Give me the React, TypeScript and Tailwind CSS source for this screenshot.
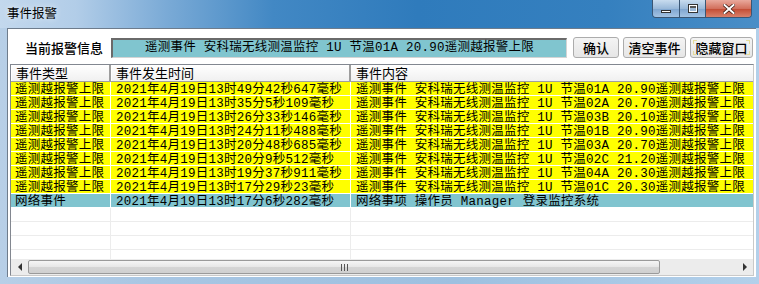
import React from "react";

type Row = { kind: "alarm" | "net"; type: string; time: string; content: string };

const rows: Row[] = [
  { kind: "alarm", type: "遥测越报警上限", time: "2021年4月19日13时49分42秒647毫秒", content: "遥测事件 安科瑞无线测温监控 1U 节温01A 20.90遥测越报警上限" },
  { kind: "alarm", type: "遥测越报警上限", time: "2021年4月19日13时35分5秒109毫秒", content: "遥测事件 安科瑞无线测温监控 1U 节温02A 20.70遥测越报警上限" },
  { kind: "alarm", type: "遥测越报警上限", time: "2021年4月19日13时26分33秒146毫秒", content: "遥测事件 安科瑞无线测温监控 1U 节温03B 20.10遥测越报警上限" },
  { kind: "alarm", type: "遥测越报警上限", time: "2021年4月19日13时24分11秒488毫秒", content: "遥测事件 安科瑞无线测温监控 1U 节温01B 20.90遥测越报警上限" },
  { kind: "alarm", type: "遥测越报警上限", time: "2021年4月19日13时20分48秒685毫秒", content: "遥测事件 安科瑞无线测温监控 1U 节温03A 20.70遥测越报警上限" },
  { kind: "alarm", type: "遥测越报警上限", time: "2021年4月19日13时20分9秒512毫秒", content: "遥测事件 安科瑞无线测温监控 1U 节温02C 21.20遥测越报警上限" },
  { kind: "alarm", type: "遥测越报警上限", time: "2021年4月19日13时19分37秒911毫秒", content: "遥测事件 安科瑞无线测温监控 1U 节温04A 20.30遥测越报警上限" },
  { kind: "alarm", type: "遥测越报警上限", time: "2021年4月19日13时17分29秒23毫秒", content: "遥测事件 安科瑞无线测温监控 1U 节温01C 20.30遥测越报警上限" },
  { kind: "net", type: "网络事件", time: "2021年4月19日13时17分6秒282毫秒", content: "网络事项 操作员 Manager 登录监控系统" },
];

const cjk = "font-['Noto_Sans_CJK_SC',sans-serif]";
const data = "font-['Liberation_Mono','Noto_Sans_CJK_SC',monospace]";

function WinButton({ label, width, focus }: { label: string; width: string; focus?: boolean }) {
  return (
    <button
      type="button"
      className={`relative ${width} h-[21px] rounded-[3px] border border-[#acacac] bg-[linear-gradient(#f4f4f4,#e6e6e6)] text-[13px] leading-none font-medium text-black ${cjk}`}
    >
      {label}
      {focus && (
        <>
          <span className="absolute left-[2px] top-[2px] h-[4px] w-[4px] border-l border-t border-[#e6dc9a]" />
          <span className="absolute right-[2px] top-[2px] h-[4px] w-[4px] border-r border-t border-[#e6dc9a]" />
          <span className="absolute left-[2px] bottom-[2px] h-[4px] w-[4px] border-l border-b border-[#e6dc9a]" />
          <span className="absolute right-[2px] bottom-[2px] h-[4px] w-[4px] border-r border-b border-[#e6dc9a]" />
        </>
      )}
    </button>
  );
}

export default function App() {
  return (
    <div className="flex h-[284px] w-[759px] flex-col overflow-hidden bg-[linear-gradient(90deg,#b7cfe7_0%,#a8c6e3_20%,#9dc0e0_60%,#b3d0ea_100%)]">
      {/* title bar */}
      <div className="flex h-[28px] shrink-0 bg-[linear-gradient(90deg,#c3d8ed_0%,#b2cde8_10%,#7aaad6_22%,#4288c4_36%,#2f7bbc_55%,#3580bf_80%,#4a8ec7_100%)]">
        <div className={`pl-[7px] pt-[5px] text-[12.5px] leading-[16px] text-black ${cjk} [text-shadow:0_0_6px_rgba(255,255,255,0.8)]`}>
          事件报警
        </div>
        <div className="ml-auto mr-[7px] flex h-[18px] self-start overflow-hidden rounded-b-[4px] border border-t-0 border-[#3a5674]">
          <div className="flex w-[27px] items-center justify-center border-r border-[#3a5674] bg-[linear-gradient(#c8dcef,#9ab9d9_50%,#7ea5cf_51%,#a4c3e3)]">
            <span className="mt-[5px] h-[3px] w-[10px] border border-[#333] bg-white" />
          </div>
          <div className="flex w-[26px] items-center justify-center border-r border-[#3a5674] bg-[linear-gradient(#c8dcef,#9ab9d9_50%,#7ea5cf_51%,#a4c3e3)]">
            <span className="h-[9px] w-[10px] border border-[#333] bg-white p-[1px]">
              <span className="block h-full w-full border-t-2 border-[#555] bg-[#9bb8d6]" />
            </span>
          </div>
          <div className="flex w-[45px] items-center justify-center bg-[linear-gradient(#e9a99c,#d2705d_50%,#c24a32_51%,#d8816b)]">
            <svg width="12" height="10" viewBox="0 0 12 10">
              <path d="M1.5 1 L10.5 9 M10.5 1 L1.5 9" stroke="#3b1a12" strokeWidth="3.4" strokeLinecap="square" />
              <path d="M1.5 1 L10.5 9 M10.5 1 L1.5 9" stroke="#ffffff" strokeWidth="2" strokeLinecap="square" />
            </svg>
          </div>
        </div>
      </div>

      {/* body */}
      <div className="flex min-h-0 flex-1 pb-[7px] pl-[7px] pr-[3px]">
        <div className="flex min-w-0 flex-1 flex-col border-l border-t border-[#6e7c8c] bg-white px-[2px] pb-[1px]">
          {/* top info row */}
          <div className="mt-[8px] flex h-[21px] items-center">
            <div className={`w-[101px] pl-[15px] text-[13px] font-medium text-black ${cjk}`}>当前报警信息</div>
            <div
              className={`flex h-[20px] w-[456px] items-center justify-center border-l-2 border-t-2 border-[#6a6a6a] border-b border-r border-b-[#d4d4d4] border-r-[#d4d4d4] bg-[#80c5cf] text-[12.5px] tracking-[0.25px] whitespace-pre text-black ${data}`}
            >
              遥测事件 安科瑞无线测温监控 1U 节温01A 20.90遥测越报警上限
            </div>
            <div className="ml-[6px] flex gap-[4px]">
              <WinButton label="确认" width="w-[46px]" />
              <WinButton label="清空事件" width="w-[63px]" />
              <WinButton label="隐藏窗口" width="w-[63px]" focus />
            </div>
          </div>

          {/* list */}
          <div className="mt-[6px] flex min-h-0 flex-1 flex-col border border-[#828790] border-r-[#c9c9c9] border-b-[#c9c9c9]">
            <div className={`flex h-[17px] shrink-0 border-b border-[#a0a0a0] bg-[linear-gradient(#ffffff,#f0f0f0)] text-[13px] leading-[16px] text-black ${cjk}`}>
              <div className="w-[100px] border-r-2 border-r-[#9d9d9d] pl-[5px] shadow-[inset_1px_1px_0_#fff]">事件类型</div>
              <div className="w-[240px] border-r-2 border-r-[#9d9d9d] pl-[5px] shadow-[inset_1px_1px_0_#fff]">事件发生时间</div>
              <div className="flex-1 pl-[5px]">事件内容</div>
            </div>

            <div className="min-h-0 flex-1 overflow-hidden">
              {rows.map((r, i) => {
                const bg = r.kind === "alarm" ? "bg-[#ffff00]" : "bg-[#80c4cf]";
                return (
                  <div key={i} className={`flex h-[14px] text-[12.5px] leading-[17px] tracking-[0.25px] whitespace-pre text-black ${data}`}>
                    <div className={`w-[100px] border-b border-r border-white pl-[4px] ${bg}`}>{r.type}</div>
                    <div className={`w-[240px] border-b border-r border-white pl-[5px] ${bg}`}>{r.time}</div>
                    <div className={`flex-1 border-b border-white pl-[5px] ${bg}`}>{r.content}</div>
                  </div>
                );
              })}
              {[0, 1, 2, 3].map((i) => (
                <div key={`e${i}`} className="flex h-[14px]">
                  <div className="w-[100px] border-b border-r border-[#ececec]" />
                  <div className="w-[240px] border-b border-r border-[#ececec]" />
                  <div className="flex-1 border-b border-[#ececec]" />
                </div>
              ))}
            </div>

            {/* horizontal scrollbar */}
            <div className="flex h-[16px] shrink-0 items-stretch bg-[#ececec]">
              <div className="flex w-[17px] items-center justify-center">
                <span className="h-0 w-0 border-y-[4px] border-r-[4px] border-y-transparent border-r-[#333]" />
              </div>
              <div className="my-[1px] flex w-[632px] items-center justify-center rounded-[2px] border border-[#9a9a9a] bg-[linear-gradient(#f5f5f5,#e6e6e6_50%,#d5d5d5_51%,#d0d0d0)]">
                <div className="flex gap-[2px]">
                  <span className="h-[7px] w-[1px] bg-[#555]" />
                  <span className="h-[7px] w-[1px] bg-[#555]" />
                  <span className="h-[7px] w-[1px] bg-[#555]" />
                </div>
              </div>
              <div className="flex-1" />
              <div className="flex w-[17px] items-center justify-center">
                <span className="h-0 w-0 border-y-[4px] border-l-[4px] border-y-transparent border-l-[#333]" />
              </div>
            </div>
          </div>
        </div>
      </div>
    </div>
  );
}
